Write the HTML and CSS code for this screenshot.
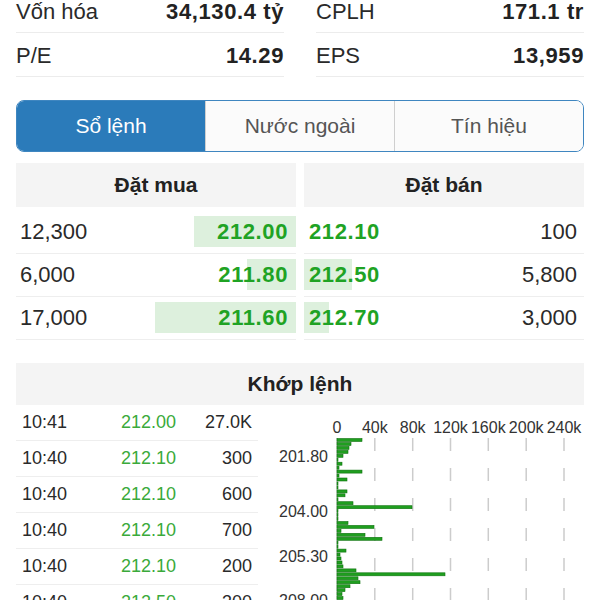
FILE: index.html
```html
<!DOCTYPE html>
<html lang="vi">
<head>
<meta charset="utf-8">
<title>Sổ lệnh</title>
<link rel="stylesheet" href="styles.css">
</head>
<body>
<div class="page">
  <section class="stats">
    <div class="stat-col">
      <div class="stat-row"><span class="label">Vốn hóa</span><span class="value">34,130.4 tỷ</span></div>
      <div class="stat-row"><span class="label">P/E</span><span class="value">14.29</span></div>
    </div>
    <div class="stat-col">
      <div class="stat-row"><span class="label">CPLH</span><span class="value">171.1 tr</span></div>
      <div class="stat-row"><span class="label">EPS</span><span class="value">13,959</span></div>
    </div>
  </section>

  <nav class="tabs">
    <div class="tab active">Sổ lệnh</div>
    <div class="tab">Nước ngoài</div>
    <div class="tab">Tín hiệu</div>
  </nav>

  <section class="book">
    <div class="side buy">
      <div class="side-head">Đặt mua</div>
      <div class="book-row"><span class="bar" style="width:102px"></span><span class="qty">12,300</span><span class="price">212.00</span></div>
      <div class="book-row"><span class="bar" style="width:49px"></span><span class="qty">6,000</span><span class="price">211.80</span></div>
      <div class="book-row"><span class="bar" style="width:141px"></span><span class="qty">17,000</span><span class="price">211.60</span></div>
    </div>
    <div class="side sell">
      <div class="side-head">Đặt bán</div>
      <div class="book-row"><span class="bar" style="width:0px"></span><span class="price">212.10</span><span class="qty">100</span></div>
      <div class="book-row"><span class="bar" style="width:48px"></span><span class="price">212.50</span><span class="qty">5,800</span></div>
      <div class="book-row"><span class="bar" style="width:25px"></span><span class="price">212.70</span><span class="qty">3,000</span></div>
    </div>
  </section>

  <section class="match">
    <div class="match-head">Khớp lệnh</div>
    <div class="match-body">
      <div class="ticks">
        <div class="tick"><span class="t-time">10:41</span><span class="t-price">212.00</span><span class="t-vol">27.0K</span></div>
        <div class="tick"><span class="t-time">10:40</span><span class="t-price">212.10</span><span class="t-vol">300</span></div>
        <div class="tick"><span class="t-time">10:40</span><span class="t-price">212.10</span><span class="t-vol">600</span></div>
        <div class="tick"><span class="t-time">10:40</span><span class="t-price">212.10</span><span class="t-vol">700</span></div>
        <div class="tick"><span class="t-time">10:40</span><span class="t-price">212.10</span><span class="t-vol">200</span></div>
        <div class="tick"><span class="t-time">10:40</span><span class="t-price">212.50</span><span class="t-vol">300</span></div>
      </div>
      <svg class="chart" width="322" height="200" viewBox="0 0 322 200">
        <g class="grid">
          <line x1="112.8" y1="33" x2="112.8" y2="200"/>
          <line x1="150.7" y1="33" x2="150.7" y2="200"/>
          <line x1="188.5" y1="33" x2="188.5" y2="200"/>
          <line x1="226.3" y1="33" x2="226.3" y2="200"/>
          <line x1="264.2" y1="33" x2="264.2" y2="200"/>
          <line x1="302" y1="33" x2="302" y2="200"/>
        </g>
        <line class="axis" x1="75" y1="33" x2="75" y2="200"/>
        <g class="xlab">
          <text x="75" y="28">0</text>
          <text x="112.8" y="28">40k</text>
          <text x="150.7" y="28">80k</text>
          <text x="188.5" y="28">120k</text>
          <text x="226.3" y="28">160k</text>
          <text x="264.2" y="28">200k</text>
          <text x="302" y="28">240k</text>
        </g>
        <g class="ylab">
          <text x="66" y="57.4">201.80</text>
          <text x="66" y="112.4">204.00</text>
          <text x="66" y="157.4">205.30</text>
          <text x="66" y="200.7">208.00</text>
        </g>
        <g class="bars">
          <rect x="75" y="33.5" width="25" height="3"/>
          <rect x="75" y="37.5" width="14" height="3"/>
          <rect x="75" y="41.4" width="12" height="3"/>
          <rect x="75" y="45.4" width="11" height="3"/>
          <rect x="75" y="49.3" width="6" height="3"/>
          <rect x="75" y="53.3" width="1" height="3"/>
          <rect x="75" y="57.2" width="5" height="3"/>
          <rect x="75" y="61.2" width="2" height="3"/>
          <rect x="75" y="65.1" width="25" height="3"/>
          <rect x="75" y="69.1" width="2" height="3"/>
          <rect x="75" y="73" width="10" height="3"/>
          <rect x="75" y="77" width="1" height="3"/>
          <rect x="75" y="80.9" width="1" height="3"/>
          <rect x="75" y="84.9" width="10" height="3"/>
          <rect x="75" y="88.8" width="8" height="3"/>
          <rect x="75" y="92.8" width="1" height="3"/>
          <rect x="75" y="96.7" width="16" height="3"/>
          <rect x="75" y="100.7" width="75" height="3"/>
          <rect x="75" y="104.6" width="1" height="3"/>
          <rect x="75" y="108.6" width="1" height="3"/>
          <rect x="75" y="112.5" width="1" height="3"/>
          <rect x="75" y="116.5" width="11" height="3"/>
          <rect x="75" y="120.4" width="37" height="3"/>
          <rect x="75" y="124.4" width="4" height="3"/>
          <rect x="75" y="128.3" width="28" height="3"/>
          <rect x="75" y="132.3" width="45" height="3"/>
          <rect x="75" y="136.2" width="1" height="3"/>
          <rect x="75" y="140.2" width="1" height="3"/>
          <rect x="75" y="144.1" width="9" height="3"/>
          <rect x="75" y="148.1" width="3" height="3"/>
          <rect x="75" y="152" width="4" height="3"/>
          <rect x="75" y="156" width="5" height="3"/>
          <rect x="75" y="159.9" width="6" height="3"/>
          <rect x="75" y="163.9" width="19" height="3"/>
          <rect x="75" y="167.8" width="108" height="3"/>
          <rect x="75" y="171.8" width="21" height="3"/>
          <rect x="75" y="175.7" width="23" height="3"/>
          <rect x="75" y="179.7" width="13" height="3"/>
          <rect x="75" y="183.6" width="8" height="3"/>
          <rect x="75" y="187.6" width="5" height="3"/>
          <rect x="75" y="191.5" width="6" height="3"/>
        </g>
      </svg>
    </div>
  </section>
</div>
</body>
</html>
```

FILE: styles.css
```css
* { box-sizing: border-box; }

html, body {
  margin: 0;
  background: #ffffff;
}

body {
  font-family: "Liberation Sans", Arial, sans-serif;
  color: #2a2a2a;
}

.page {
  padding: 0 16px;
  height: 600px;
  overflow: hidden;
}

/* ---- stats ---- */
.stats {
  display: flex;
  gap: 32px;
  margin-top: -11px;
}

.stat-col { flex: 1; }

.stat-row {
  height: 44px;
  padding-top: 3px;
  border-bottom: 1px solid #ececec;
  display: flex;
  align-items: center;
  justify-content: space-between;
  font-size: 22px;
}

.stat-row .value {
  font-weight: bold;
  letter-spacing: 0.6px;
  color: #222;
}

/* ---- tabs ---- */
.tabs {
  margin-top: 23px;
  height: 52px;
  display: flex;
  border: 1.5px solid #3f86c0;
  border-radius: 8px;
  overflow: hidden;
}

.tab {
  flex: 1;
  display: flex;
  align-items: center;
  justify-content: center;
  font-size: 21px;
  color: #555;
  background: #fbfbfb;
  border-left: 1px solid #cfcfcf;
}

.tab:first-child { border-left: none; }

.tab.active {
  background: #2b7bba;
  color: #ffffff;
}

/* ---- order book ---- */
.book {
  margin-top: 11px;
  display: grid;
  grid-template-columns: 1fr 1fr;
  gap: 8px;
}

.side-head {
  height: 44px;
  background: #f4f4f4;
  display: flex;
  align-items: center;
  justify-content: center;
  font-size: 21px;
  font-weight: bold;
  color: #222;
  margin-bottom: 4px;
}

.book-row {
  position: relative;
  height: 43px;
  border-bottom: 1px solid #eeeeee;
  display: flex;
  align-items: center;
  justify-content: space-between;
  font-size: 22px;
}

.buy .book-row { padding: 0 8px 0 4px; }
.sell .book-row { padding: 0 7px 0 5px; }

.book-row .bar {
  position: absolute;
  top: 5px;
  bottom: 6px;
  background: #ddf0dd;
}

.buy .bar { right: 0; }
.sell .bar { left: 0; }

.book-row .qty,
.book-row .price {
  position: relative;
}

.book-row .price {
  font-weight: bold;
  color: #1fa324;
  letter-spacing: 0.6px;
}

/* ---- matched orders ---- */
.match { margin-top: 23px; }

.match-head {
  height: 42px;
  background: #f4f4f4;
  display: flex;
  align-items: center;
  justify-content: center;
  font-size: 21px;
  font-weight: bold;
  color: #222;
}

.match-body {
  display: flex;
  gap: 4px;
}

.ticks {
  width: 242px;
  flex: none;
}

.tick {
  height: 36px;
  border-bottom: 1px solid #eeeeee;
  display: grid;
  grid-template-columns: 95px 59px 1fr;
  align-items: center;
  padding: 0 6px;
  font-size: 18px;
}

.t-price {
  text-align: right;
  color: #3aaa3a;
}

.t-vol { text-align: right; }

.chart {
  display: block;
  flex: none;
  overflow: visible;
}

.chart .grid line {
  stroke: #cccccc;
  stroke-width: 1.5;
  stroke-dasharray: 13 17;
}

.chart .axis {
  stroke: #bbbbbb;
  stroke-width: 1;
}

.chart text {
  font-family: "Liberation Sans", Arial, sans-serif;
  font-size: 16px;
  fill: #333333;
}

.chart .xlab text { text-anchor: middle; }
.chart .ylab text { text-anchor: end; }

.chart .bars rect {
  fill: #1f9e1f;
  stroke: #0f720f;
  stroke-width: 0.6;
}
```
